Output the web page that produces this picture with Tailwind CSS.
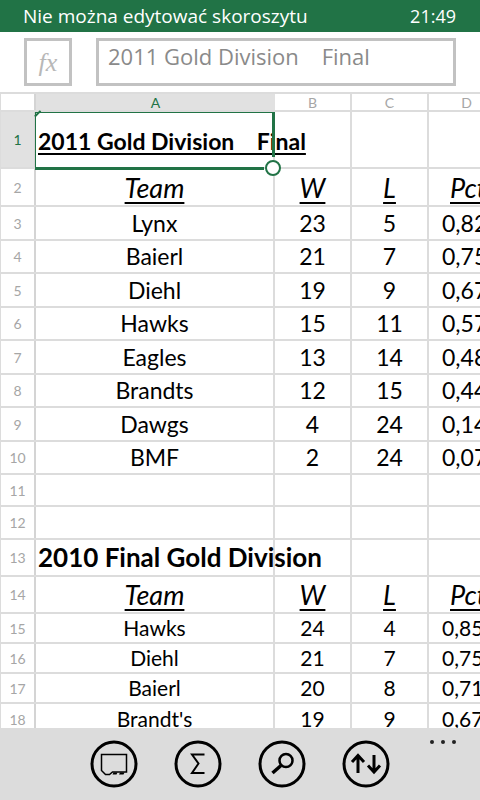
<!DOCTYPE html>
<html lang="pl">
  <head>
    <meta charset="UTF-8" />
    <meta name="viewport" content="width=device-width, initial-scale=1.0" />
    <title>Excel</title>
    <script src="https://cdn.jsdelivr.net/npm/@tailwindcss/browser@4"></script>
  </head>
  <body class="bg-white">
    <div class="relative flex flex-col w-[480px] h-[800px] overflow-hidden font-['Open_Sans',sans-serif]">
      <!-- status bar -->
      <div class="flex items-center justify-between h-8 shrink-0 pl-[23px] pr-[24px] bg-[#217346] text-white text-[19px]">
        <span>Nie można edytować skoroszytu</span>
        <span class="text-[18px]">21:49</span>
      </div>

      <!-- formula bar -->
      <div class="flex items-start gap-6 h-[60px] shrink-0 pt-[6px] pl-6 pr-6">
        <div class="flex items-center justify-center w-12 h-12 border-[3px] border-[#c2c2c2] font-['Liberation_Serif',serif] italic text-[26px] text-[#b8b8b8]">fx</div>
        <div class="flex-1 h-12 border-[3px] border-[#c2c2c2] pl-[9px] text-[22px] leading-[30px] text-[#8a8a8a] whitespace-pre">2011 Gold Division    Final</div>
      </div>

      <!-- sheet -->
      <div id="sheet" class="relative flex-1 overflow-hidden border-l border-[#dcdcdc] font-['Lato',sans-serif] text-black">
        <div class="flex h-5 border-y-2 border-[#dcdcdc] text-[14px] leading-[17px] text-[#a6a6a6] text-center">
          <div class="w-[35px] shrink-0 border-r-2 border-[#d4d4d4]"></div>
          <div class="w-[239px] shrink-0 bg-[#e1e1e1] text-[#217346]">A</div>
          <div class="w-[77px] shrink-0 border-r-2 border-[#dcdcdc]">B</div>
          <div class="w-[77px] shrink-0 border-r-2 border-[#dcdcdc]">C</div>
          <div class="w-[77px] shrink-0 border-r-2 border-[#dcdcdc]">D</div>
        </div>
        <div id="rows"></div>

        <!-- selection -->
        <div class="absolute left-[34px] top-5 w-[240px] h-[57px] border-l border-t border-[#217346]"></div>
        <div class="absolute left-[271px] top-5 w-[3px] h-[45px] bg-[#217346]"></div>
        <div class="absolute left-[34px] top-[75px] w-[229px] h-[3px] bg-[#217346]"></div>
        <div class="absolute left-[264px] top-[68px] w-4 h-4 rounded-full border-2 border-[#217346] bg-white"></div>
        <div class="absolute left-[32px] top-[19px] w-[8px] h-[4px] border-b-2 border-[#217346] -rotate-45"></div>
      </div>

      <!-- app bar -->
      <div class="relative flex items-start justify-center gap-9 h-[72px] shrink-0 pt-[12px] bg-[#dcdcdc]">
        <svg class="w-12 h-12" viewBox="0 0 48 48" fill="none" stroke="#000">
          <circle cx="24" cy="24" r="22" stroke-width="3" />
          <path d="M11.500 14.500H36.500V32H22.500L19.500 34.500H15.500L11.500 30.500Z" stroke-width="1.500" />
          <path d="M23.500 32.500H27.500L26.500 34.500H22.500ZM30 32.500H34.500L33.500 34.500H29Z" fill="#000" stroke="none" />
        </svg>
        <svg class="w-12 h-12" viewBox="0 0 48 48" fill="none" stroke="#000">
          <circle cx="24" cy="24" r="22" stroke-width="3" />
          <path d="M30.500 14.500H18L24.500 23.500L18 33H30.500" stroke-width="2" />
        </svg>
        <svg class="w-12 h-12" viewBox="0 0 48 48" fill="none" stroke="#000">
          <circle cx="24" cy="24" r="22" stroke-width="3" />
          <circle cx="28" cy="20.500" r="6.500" stroke-width="2.500" />
          <path d="M23 25.500L14.500 33" stroke-width="3.500" />
        </svg>
        <svg class="w-12 h-12" viewBox="0 0 48 48" fill="none" stroke="#000">
          <circle cx="24" cy="24" r="22" stroke-width="3" />
          <path d="M16 33V16M10 22L16 15.500L22 22" stroke-width="3" />
          <path d="M32 15V32M26 25.500L32 32L38 25.500" stroke-width="3" />
        </svg>
        <div class="absolute left-[430px] top-[12px] flex gap-[7px]">
          <div class="w-1 h-1 rounded-full bg-[#222]"></div>
          <div class="w-1 h-1 rounded-full bg-[#222]"></div>
          <div class="w-1 h-1 rounded-full bg-[#222]"></div>
        </div>
      </div>
    </div>

    <script>
      // [height, team, W, L, Pct, style]
      const data = [
        [57, "", "", "", ""],
        [38, "Team", "W", "L", "Pct", "head"],
        [34, "Lynx", "23", "5", "0,82"],
        [33, "Baierl", "21", "7", "0,75"],
        [34, "Diehl", "19", "9", "0,67"],
        [33, "Hawks", "15", "11", "0,57"],
        [34, "Eagles", "13", "14", "0,48"],
        [33, "Brandts", "12", "15", "0,44"],
        [34, "Dawgs", "4", "24", "0,14"],
        [33, "BMF", "2", "24", "0,07"],
        [32, "", "", "", ""],
        [33, "", "", "", ""],
        [37, "", "", "", ""],
        [37, "Team", "W", "L", "Pct", "head"],
        [30, "Hawks", "24", "4", "0,85", "small"],
        [30, "Diehl", "21", "7", "0,75", "small"],
        [30, "Baierl", "20", "8", "0,71", "small"],
        [32, "Brandt's", "19", "9", "0,67", "small"],
      ];

      const textClass = {
        head: "text-[27px] italic underline underline-offset-[4px] pt-[2px]",
        small: "text-[21px]",
      };

      document.getElementById("rows").innerHTML = data
        .map((r, i) => {
          const head = r[5] === "head";
          const size = textClass[r[5]] || "text-[23px]";
          const cell = "flex items-center justify-center shrink-0 border-r-2 border-[#dcdcdc] ";
          const num = i === 0
            ? "bg-[#e1e1e1] text-[#217346]"
            : "text-[#a6a6a6]";
          let a = `<div class="${cell} w-[239px] ${size}">${r[1]}</div>`;
          if (i === 0) a = `<div class="${cell} relative w-[239px]"><span class="absolute left-[2px] top-[12px] text-[23px] font-bold underline underline-offset-[3px] whitespace-pre">2011 Gold Division    Final</span></div>`;
          if (i === 12) a = `<div class="${cell} relative w-[239px]"><span class="absolute left-[2px] top-[-2px] text-[26px] font-bold whitespace-pre">2010 Final Gold Division</span></div>`;
          return `<div class="flex border-b-2 border-[#dcdcdc]" style="height:${r[0]}px">
            <div class="flex items-center justify-center w-[35px] shrink-0 border-r-2 border-[#d4d4d4] text-[14px] ${num}">${i + 1}</div>
            ${a}
            <div class="${cell} w-[77px] ${size}">${r[2]}</div>
            <div class="${cell} w-[77px] ${size}">${r[3]}</div>
            <div class="${cell} w-[77px] justify-start ${head ? "pl-[21px]" : "pl-[13px]"} whitespace-nowrap ${size}">${r[4]}</div>
          </div>`;
        })
        .join("");
    </script>
  </body>
</html>
